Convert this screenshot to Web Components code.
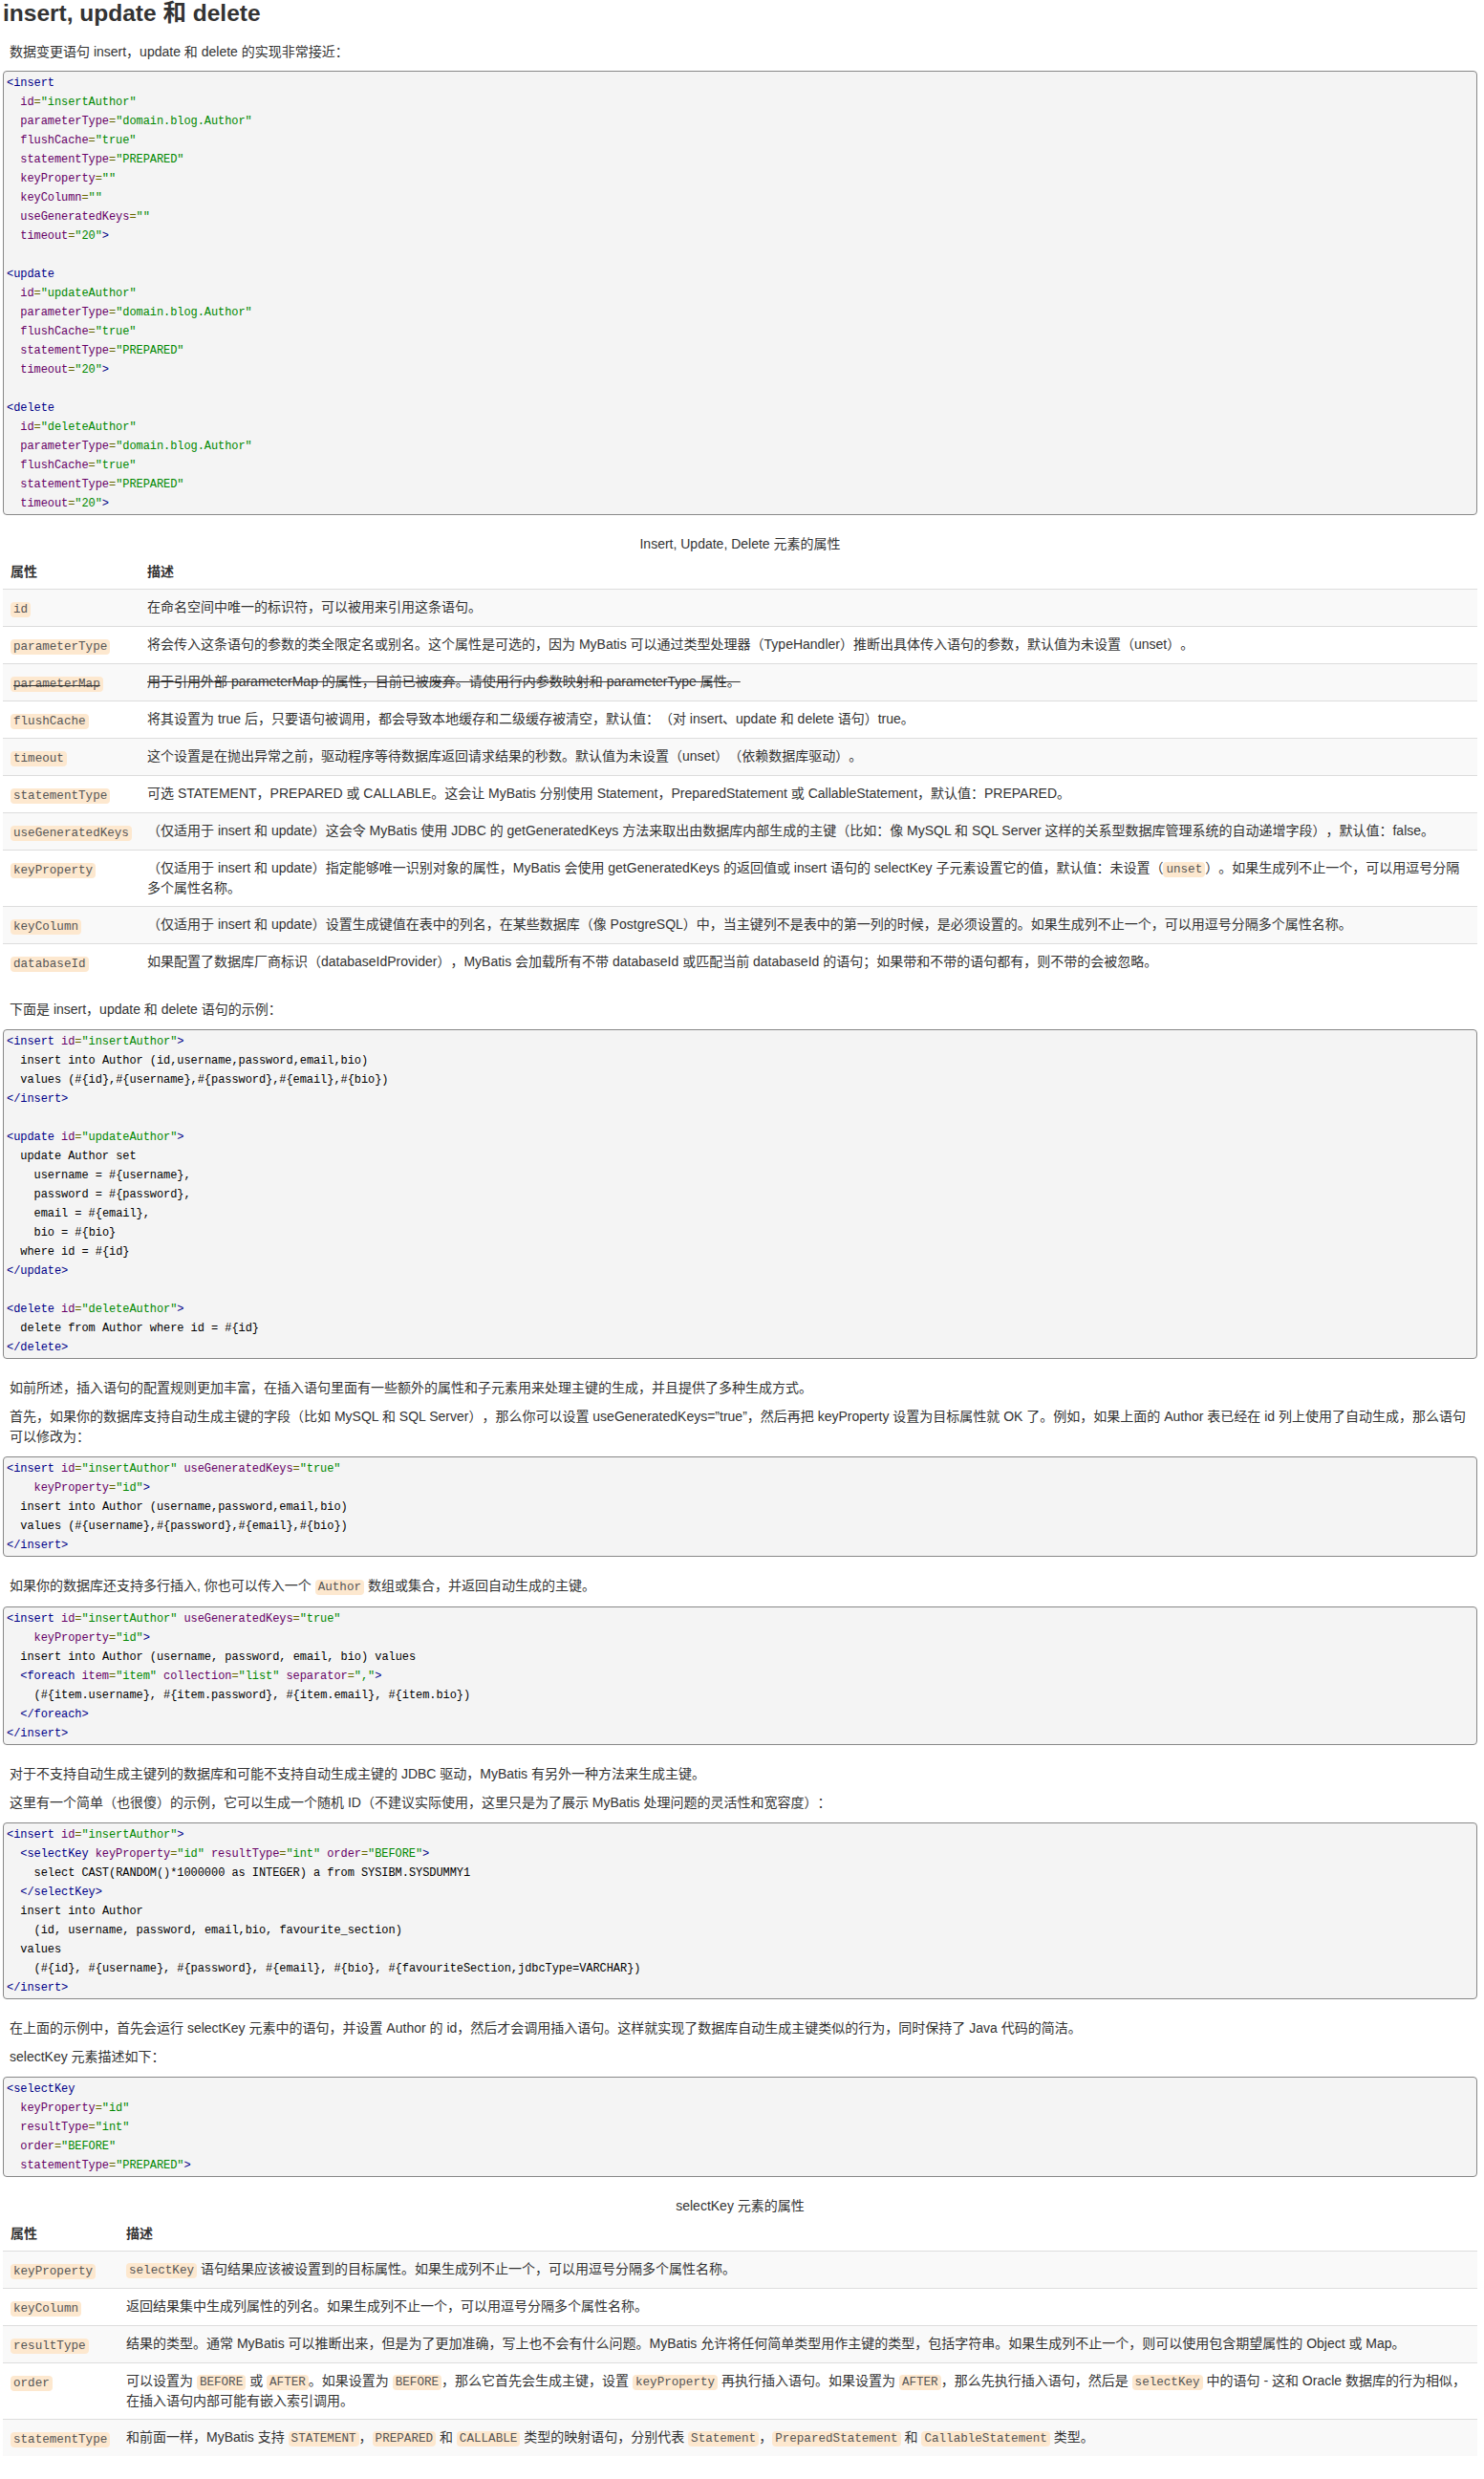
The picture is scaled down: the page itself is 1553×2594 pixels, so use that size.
<!DOCTYPE html>
<html lang="zh">
<head>
<meta charset="utf-8">
<title>insert, update 和 delete</title>
<style>
    html, body { background: #fff; }
    body {
        margin: 0 7px 0 3px;
        font: 14px/21px "Liberation Sans", "Noto Sans CJK SC", sans-serif;
        color: #333;
        text-spacing-trim: space-all;
    }
</style>
</head>
<body>

<doc-heading>insert, update 和 delete</doc-heading>
<doc-para>数据变更语句 insert，update 和 delete 的实现非常接近：</doc-para>

<code-block>&lt;insert
  id="insertAuthor"
  parameterType="domain.blog.Author"
  flushCache="true"
  statementType="PREPARED"
  keyProperty=""
  keyColumn=""
  useGeneratedKeys=""
  timeout="20">

&lt;update
  id="updateAuthor"
  parameterType="domain.blog.Author"
  flushCache="true"
  statementType="PREPARED"
  timeout="20">

&lt;delete
  id="deleteAuthor"
  parameterType="domain.blog.Author"
  flushCache="true"
  statementType="PREPARED"
  timeout="20"></code-block>

<attr-table caption="Insert, Update, Delete 元素的属性" style="--key-col: 143px">
    <attr-row><inline-code slot="key">id</inline-code>在命名空间中唯一的标识符，可以被用来引用这条语句。</attr-row>
    <attr-row><inline-code slot="key">parameterType</inline-code>将会传入这条语句的参数的类全限定名或别名。这个属性是可选的，因为 MyBatis 可以通过类型处理器（TypeHandler）推断出具体传入语句的参数，默认值为未设置（unset）。</attr-row>
    <attr-row deprecated><inline-code slot="key">parameterMap</inline-code>用于引用外部 parameterMap 的属性，目前已被废弃。请使用行内参数映射和 parameterType 属性。</attr-row>
    <attr-row><inline-code slot="key">flushCache</inline-code>将其设置为 true 后，只要语句被调用，都会导致本地缓存和二级缓存被清空，默认值：（对 insert、update 和 delete 语句）true。</attr-row>
    <attr-row><inline-code slot="key">timeout</inline-code>这个设置是在抛出异常之前，驱动程序等待数据库返回请求结果的秒数。默认值为未设置（unset）（依赖数据库驱动）。</attr-row>
    <attr-row><inline-code slot="key">statementType</inline-code>可选 STATEMENT，PREPARED 或 CALLABLE。这会让 MyBatis 分别使用 Statement，PreparedStatement 或 CallableStatement，默认值：PREPARED。</attr-row>
    <attr-row><inline-code slot="key">useGeneratedKeys</inline-code>（仅适用于 insert 和 update）这会令 MyBatis 使用 JDBC 的 getGeneratedKeys 方法来取出由数据库内部生成的主键（比如：像 MySQL 和 SQL Server 这样的关系型数据库管理系统的自动递增字段），默认值：false。</attr-row>
    <attr-row><inline-code slot="key">keyProperty</inline-code>（仅适用于 insert 和 update）指定能够唯一识别对象的属性，MyBatis 会使用 getGeneratedKeys 的返回值或 insert 语句的 selectKey 子元素设置它的值，默认值：未设置（<inline-code>unset</inline-code>）。如果生成列不止一个，可以用逗号分隔多个属性名称。</attr-row>
    <attr-row><inline-code slot="key">keyColumn</inline-code>（仅适用于 insert 和 update）设置生成键值在表中的列名，在某些数据库（像 PostgreSQL）中，当主键列不是表中的第一列的时候，是必须设置的。如果生成列不止一个，可以用逗号分隔多个属性名称。</attr-row>
    <attr-row><inline-code slot="key">databaseId</inline-code>如果配置了数据库厂商标识（databaseIdProvider），MyBatis 会加载所有不带 databaseId 或匹配当前 databaseId 的语句；如果带和不带的语句都有，则不带的会被忽略。</attr-row>
</attr-table>

<doc-para>下面是 insert，update 和 delete 语句的示例：</doc-para>

<code-block>&lt;insert id="insertAuthor">
  insert into Author (id,username,password,email,bio)
  values (#{id},#{username},#{password},#{email},#{bio})
&lt;/insert>

&lt;update id="updateAuthor">
  update Author set
    username = #{username},
    password = #{password},
    email = #{email},
    bio = #{bio}
  where id = #{id}
&lt;/update>

&lt;delete id="deleteAuthor">
  delete from Author where id = #{id}
&lt;/delete></code-block>

<doc-para>如前所述，插入语句的配置规则更加丰富，在插入语句里面有一些额外的属性和子元素用来处理主键的生成，并且提供了多种生成方式。</doc-para>
<doc-para>首先，如果你的数据库支持自动生成主键的字段（比如 MySQL 和 SQL Server），那么你可以设置 useGeneratedKeys=”true”，然后再把 keyProperty 设置为目标属性就 OK 了。例如，如果上面的 Author 表已经在 id 列上使用了自动生成，那么语句可以修改为：</doc-para>

<code-block>&lt;insert id="insertAuthor" useGeneratedKeys="true"
    keyProperty="id">
  insert into Author (username,password,email,bio)
  values (#{username},#{password},#{email},#{bio})
&lt;/insert></code-block>

<doc-para style="margin-bottom: 11.4px">如果你的数据库还支持多行插入, 你也可以传入一个 <inline-code>Author</inline-code> 数组或集合，并返回自动生成的主键。</doc-para>

<code-block>&lt;insert id="insertAuthor" useGeneratedKeys="true"
    keyProperty="id">
  insert into Author (username, password, email, bio) values
  &lt;foreach item="item" collection="list" separator=",">
    (#{item.username}, #{item.password}, #{item.email}, #{item.bio})
  &lt;/foreach>
&lt;/insert></code-block>

<doc-para>对于不支持自动生成主键列的数据库和可能不支持自动生成主键的 JDBC 驱动，MyBatis 有另外一种方法来生成主键。</doc-para>
<doc-para>这里有一个简单（也很傻）的示例，它可以生成一个随机 ID（不建议实际使用，这里只是为了展示 MyBatis 处理问题的灵活性和宽容度）：</doc-para>

<code-block>&lt;insert id="insertAuthor">
  &lt;selectKey keyProperty="id" resultType="int" order="BEFORE">
    select CAST(RANDOM()*1000000 as INTEGER) a from SYSIBM.SYSDUMMY1
  &lt;/selectKey>
  insert into Author
    (id, username, password, email,bio, favourite_section)
  values
    (#{id}, #{username}, #{password}, #{email}, #{bio}, #{favouriteSection,jdbcType=VARCHAR})
&lt;/insert></code-block>

<doc-para>在上面的示例中，首先会运行 selectKey 元素中的语句，并设置 Author 的 id，然后才会调用插入语句。这样就实现了数据库自动生成主键类似的行为，同时保持了 Java 代码的简洁。</doc-para>
<doc-para>selectKey 元素描述如下：</doc-para>

<code-block>&lt;selectKey
  keyProperty="id"
  resultType="int"
  order="BEFORE"
  statementType="PREPARED"></code-block>

<attr-table caption="selectKey 元素的属性" style="--key-col: 121px">
    <attr-row><inline-code slot="key">keyProperty</inline-code><inline-code>selectKey</inline-code> 语句结果应该被设置到的目标属性。如果生成列不止一个，可以用逗号分隔多个属性名称。</attr-row>
    <attr-row><inline-code slot="key">keyColumn</inline-code>返回结果集中生成列属性的列名。如果生成列不止一个，可以用逗号分隔多个属性名称。</attr-row>
    <attr-row><inline-code slot="key">resultType</inline-code>结果的类型。通常 MyBatis 可以推断出来，但是为了更加准确，写上也不会有什么问题。MyBatis 允许将任何简单类型用作主键的类型，包括字符串。如果生成列不止一个，则可以使用包含期望属性的 Object 或 Map。</attr-row>
    <attr-row><inline-code slot="key">order</inline-code>可以设置为 <inline-code>BEFORE</inline-code> 或 <inline-code>AFTER</inline-code>。如果设置为 <inline-code>BEFORE</inline-code>，那么它首先会生成主键，设置 <inline-code>keyProperty</inline-code> 再执行插入语句。如果设置为 <inline-code>AFTER</inline-code>，那么先执行插入语句，然后是 <inline-code>selectKey</inline-code> 中的语句 - 这和 Oracle 数据库的行为相似，在插入语句内部可能有嵌入索引调用。</attr-row>
    <attr-row><inline-code slot="key">statementType</inline-code>和前面一样，MyBatis 支持 <inline-code>STATEMENT</inline-code>，<inline-code>PREPARED</inline-code> 和 <inline-code>CALLABLE</inline-code> 类型的映射语句，分别代表 <inline-code>Statement</inline-code>，<inline-code>PreparedStatement</inline-code> 和 <inline-code>CallableStatement</inline-code> 类型。</attr-row>
</attr-table>

<script>
// Big page title
class DocHeading extends HTMLElement {
    constructor() {
        super();
        this.attachShadow({mode: 'open'});
        this.shadowRoot.innerHTML = `<style>
            :host { display: block; margin-bottom: 17px; font-size: 24.5px; line-height: 27px; font-weight: bold; color: #333; }
        </style><slot></slot>`;
    }
}
customElements.define('doc-heading', DocHeading);

class DocPara extends HTMLElement {
    constructor() {
        super();
        this.attachShadow({mode: 'open'});
        this.shadowRoot.innerHTML = `<style>
            :host { display: block; margin-bottom: 9.4px; padding: 0 0 0 7px; }
        </style><slot></slot>`;
    }
}
customElements.define('doc-para', DocPara);

class InlineCode extends HTMLElement {
    constructor() {
        super();
        this.attachShadow({mode: 'open'});
        this.shadowRoot.innerHTML = `<style>
            :host { display: inline; }
            code {
                padding: 1px 3px;
                border-radius: 4px;
                background: #fde8cf;
                color: #555;
                font: 12.6px "Liberation Mono", monospace;
            }
        </style><code><slot></slot></code>`;
    }
}
customElements.define('inline-code', InlineCode);

// Takes its source as text and colours it the way prettify colours xml
class CodeBlock extends HTMLElement {
    constructor() {
        super();
        this.attachShadow({mode: 'open'});
        this.shadowRoot.innerHTML = `<style>
            :host { display: block; margin-bottom: 20px; }
            pre {
                margin: 0;
                padding: 2px 3px 1px;
                border: 1px solid #888;
                border-radius: 4px;
                background: #f4f4f4;
                color: #000;
                font: 12px/20px "Liberation Mono", monospace;
                letter-spacing: -0.07px;
                white-space: pre;
                overflow: hidden;
            }
            .tag { color: #008; }
            .atn { color: #606; }
            .atv { color: #080; }
            .pun { color: #660; }
        </style><pre></pre>`;
    }
    connectedCallback() {
        const source = this.textContent;
        this.textContent = '';
        const pre = this.shadowRoot.querySelector('pre');
        const tokens = /<\/?\w+|>|"[^"]*"|\w+(?==)|=|\s+|[^<>"=\s\w]+|\w+/g;
        let inTag = false;
        for (const token of source.match(tokens) || []) {
            let cls = '';
            if (token[0] === '<') {
                inTag = true;
                cls = 'tag';
            } else if (token === '>') {
                cls = 'tag';
                inTag = false;
            } else if (inTag) {
                if (token[0] === '"') cls = 'atv';
                else if (token === '=') cls = 'pun';
                else if (token.trim()) cls = 'atn';
            }
            if (cls) {
                const span = document.createElement('span');
                span.className = cls;
                span.textContent = token;
                pre.appendChild(span);
            } else {
                pre.appendChild(document.createTextNode(token));
            }
        }
    }
}
customElements.define('code-block', CodeBlock);

class AttrRow extends HTMLElement {
    constructor() {
        super();
        this.attachShadow({mode: 'open'});
        this.shadowRoot.innerHTML = `<style>
            :host {
                display: grid;
                grid-template-columns: var(--key-col) minmax(0, 1fr);
                border-top: 1px solid #ddd;
            }
            :host(:nth-child(odd)) { background: #f9f9f9; }
            :host([head]) { border-top: 0; background: none; font-weight: bold; }
            :host([head]) .key, :host([head]) .desc { padding: 8px 8px 7px; line-height: 21px; }
            :host([deprecated]) .key, :host([deprecated]) .desc { text-decoration: line-through; }
            .key, .desc { padding: 8px; min-width: 0; }
            .key { line-height: 22px; }
        </style>
        <div class="key"><slot name="key"></slot></div>
        <div class="desc"><slot></slot></div>`;
    }
}
customElements.define('attr-row', AttrRow);

// Caption, header row, and the rows passed in through the slot
class AttrTable extends HTMLElement {
    constructor() {
        super();
        this.attachShadow({mode: 'open'});
        this.shadowRoot.innerHTML = `<style>
            :host { display: block; margin-bottom: 20px; }
            .caption { text-align: center; }
        </style>
        <div class="caption"></div>
        <attr-row head><span slot="key">属性</span>描述</attr-row>
        <slot></slot>`;
    }
    connectedCallback() {
        this.shadowRoot.querySelector('.caption').textContent = this.getAttribute('caption');
    }
}
customElements.define('attr-table', AttrTable);
</script>
</body>
</html>
